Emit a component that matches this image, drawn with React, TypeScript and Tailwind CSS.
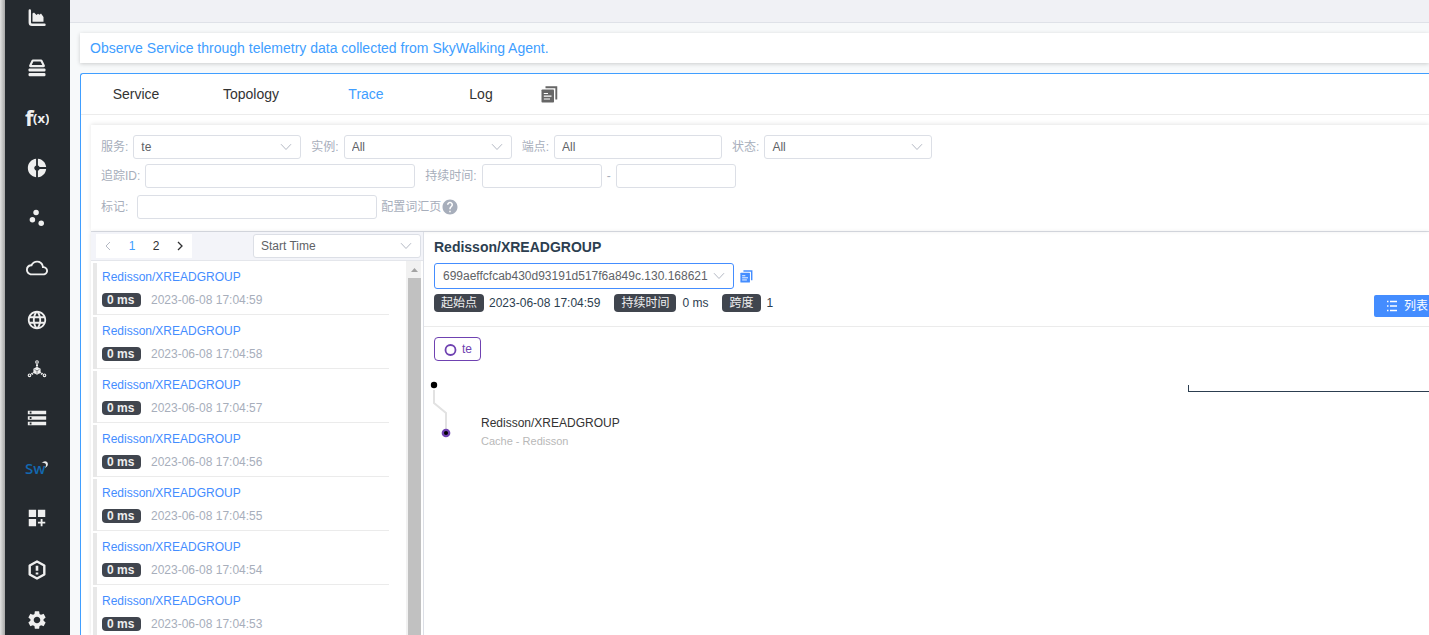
import type { ReactNode } from "react";
import clsx from "clsx";
import {
  MdCloudQueue,
  MdDashboardCustomize,
  MdDonutSmall,
  MdHelp,
  MdLanguage,
  MdScatterPlot,
  MdSettings,
  MdStorage,
} from "react-icons/md";

const AreaChartIcon = () => (
  <svg width="18" height="18" viewBox="0 0 18 18">
    <path d="M1.800 1.500V13.500Q1.800 15.800 4 15.800H16.500" fill="none" stroke="currentColor" strokeWidth="2.400" strokeLinecap="round" />
    <path d="M4.500 12.800V4.500L6 3.600L8.500 6L10 4.800L11.500 5.800L13 4.500L15.500 8V12.800Z" fill="currentColor" />
  </svg>
);

const StackIcon = () => (
  <svg width="18" height="18" viewBox="0 0 18 18" fill="currentColor">
    <path fillRule="evenodd" d="M3.600 1.200Q4 .400 4.900 .400H13.100Q14 .400 14.400 1.200L16.900 6.400Q17.200 8.200 15.500 8.200H2.500Q.800 8.200 1.100 6.400ZM5.400 2.500L3.700 6H14.300L12.600 2.500Z" />
    <rect x=".5" y="9.400" width="17" height="3.200" rx="1" />
    <rect x=".5" y="14" width="17" height="3.200" rx="1.200" />
  </svg>
);

const FunctionIcon = () => (
  <svg width="24" height="24" viewBox="0 0 24 24" fill="currentColor" fontFamily="Open Sans, sans-serif" fontWeight="700">
    <text x="0" y="20" fontSize="22">f</text>
    <text x="8" y="17" fontSize="13">(x)</text>
  </svg>
);

const ClusterIcon = () => (
  <svg width="20" height="18" viewBox="0 0 20 18" fill="none" stroke="currentColor">
    <circle cx="10" cy="2" r="1.300" strokeWidth="1.100" />
    <circle cx="2.500" cy="15.300" r="1.300" strokeWidth="1.100" />
    <circle cx="17.500" cy="15.300" r="1.300" strokeWidth="1.100" />
    <path d="M10 4.300V7M4.500 14.200L7 12.500M15.500 14.200L13 12.500" strokeWidth="2" strokeDasharray="1.600 .7" />
    <path d="M10 6.800L13.600 8.800V12.800L10 14.800L6.400 12.800V8.800Z" fill="currentColor" stroke="none" />
    <path d="M7.500 9.400L10 10.800L12.500 9.400M10 10.800V13.700" stroke="#252a2f" strokeWidth=".5" />
  </svg>
);

const SkyWalkingIcon = () => (
  <svg width="24" height="18" viewBox="0 0 24 18">
    <text x="0" y="14.500" fontSize="15" fontFamily="Open Sans, sans-serif" fontWeight="600" fill="#1368b0">Sw</text>
    <path d="M16.500 4Q20 1 22.500 3.500Q24 6.500 20 9Q22 5.500 20 4.300Q18.500 3.500 16.500 4Z" fill="#e8e8e8" />
  </svg>
);

const AlarmIcon = () => (
  <svg width="20" height="20" viewBox="0 0 20 20" fill="none" stroke="currentColor">
    <path d="M10 1.500L17.300 5.500V14.500L10 18.500L2.700 14.500V5.500Z" strokeWidth="2.400" strokeLinejoin="round" />
    <path d="M10 5.800V10.800M10 12.500V14.600" strokeWidth="2.600" />
  </svg>
);

const CopyIcon = ({ size }: { size: number }) => (
  <svg width={size} height={size} viewBox="0 0 17 17">
    <path d="M4.500 1.200H15.300V13.500" fill="none" stroke="currentColor" strokeWidth="1.900" />
    <rect x=".5" y="3.500" width="12.500" height="13" rx=".8" fill="currentColor" />
    <path d="M2.800 7.500H7M2.800 10.200H10.500M2.800 13H9" stroke="#fff" strokeWidth="1.200" />
  </svg>
);

const Chevron = () => (
  <svg className="pointer-events-none absolute right-[9px] top-1/2 -translate-y-1/2 text-[#b4b9c4]" width="12" height="8" viewBox="0 0 12 8">
    <path d="M1 1.200L6 6.500L11 1.200" fill="none" stroke="currentColor" />
  </svg>
);

const menu: { name: string; icon: ReactNode }[] = [
  { name: "General Service", icon: <AreaChartIcon /> },
  { name: "Service Mesh", icon: <StackIcon /> },
  { name: "Functions", icon: <FunctionIcon /> },
  { name: "Browser", icon: <MdDonutSmall size={22} /> },
  { name: "Kubernetes", icon: <MdScatterPlot size={22} /> },
  { name: "Infrastructure", icon: <MdCloudQueue size={22} /> },
  { name: "Web", icon: <MdLanguage size={22} /> },
  { name: "Cluster", icon: <ClusterIcon /> },
  { name: "Database", icon: <MdStorage size={22} /> },
  { name: "Self Observability", icon: <SkyWalkingIcon /> },
  { name: "Dashboards", icon: <MdDashboardCustomize size={22} /> },
  { name: "Alarms", icon: <AlarmIcon /> },
  { name: "Settings", icon: <MdSettings size={22} /> },
];

const tabs = ["Service", "Topology", "Trace", "Log"];
const seconds = [59, 58, 57, 56, 55, 54, 53];

const controlBase = "rounded-[3px] border bg-white text-xs text-[#606266] outline-none";
const control = clsx(controlBase, "h-6 border-[#dcdfe6] px-[7px]");

function Select({ id, value, label, active }: { id: string; value: string; label?: string; active?: boolean }) {
  return (
    <span className="relative block">
      <select
        id={id}
        aria-label={label}
        className={clsx("block appearance-none", active ? [controlBase, "h-[26px] w-[300px] border-[#448dff] px-2"] : [control, "w-[168px]"])}
      >
        <option>{value}</option>
      </select>
      <Chevron />
    </span>
  );
}

function Field({ id, label, children }: { id: string; label: string; children: ReactNode }) {
  return (
    <div className="flex items-center gap-[5px]">
      <label htmlFor={id}>{label}</label>
      {children}
    </div>
  );
}

function Filters() {
  return (
    <form className="flex h-[107px] shrink-0 flex-col gap-[5px] border-b border-[#dcdfe6] pl-[10px] pt-[10px] text-xs text-[#a7aebb] shadow-[0_-1px_4px_rgba(0,0,0,0.1)]">
      <div className="flex gap-[10px]">
        <Field id="service" label="服务:"><Select id="service" value="te" /></Field>
        <Field id="instance" label="实例:"><Select id="instance" value="All" /></Field>
        <Field id="endpoint" label="端点:"><input id="endpoint" defaultValue="All" className={clsx(control, "w-[168px]")} /></Field>
        <Field id="status" label="状态:"><Select id="status" value="All" /></Field>
      </div>
      <div className="flex gap-[10px]">
        <Field id="trace" label="追踪ID:"><input id="trace" className={clsx(control, "w-[270px]")} /></Field>
        <Field id="duration" label="持续时间:">
          <input id="duration" className={clsx(control, "w-[120px]")} />
          <span>-</span>
          <input aria-label="持续时间" className={clsx(control, "w-[120px]")} />
        </Field>
      </div>
      <div className="flex items-center pt-[2px]">
        <label htmlFor="tags" className="mr-[9px]">标记:</label>
        <input id="tags" className={clsx(control, "mr-1 w-[240px]")} />
        <a href="#tags" className="flex items-center">配置词汇页<MdHelp size={18} /></a>
      </div>
    </form>
  );
}

function TraceList() {
  return (
    <section className="flex w-[333px] shrink-0 flex-col border-r border-[#dcdfe6]">
      <div className="flex h-[29px] shrink-0 items-center justify-between border-b border-[#e4e6eb] bg-[#f3f4f9] pl-[5px] pr-[2px]">
        <div className="flex h-6 bg-white text-xs">
          <button aria-label="Previous page" className="flex w-6 items-center justify-center text-[#b4b9c4]">
            <svg width="8" height="10" viewBox="0 0 8 10"><path d="M6 1L2 5L6 9" fill="none" stroke="currentColor" /></svg>
          </button>
          <button className="w-6 text-[#409eff]">1</button>
          <button className="w-6 text-[#303133]">2</button>
          <button aria-label="Next page" className="flex w-6 items-center justify-center text-[#303133]">
            <svg width="8" height="10" viewBox="0 0 8 10"><path d="M2 1L6 5L2 9" fill="none" stroke="currentColor" strokeWidth="1.300" /></svg>
          </button>
        </div>
        <Select id="order" label="Order" value="Start Time" />
      </div>
      <div className="flex min-h-0 flex-1 pr-[2px]">
        <ul className="flex min-w-0 flex-1 flex-col gap-[2px] overflow-hidden pl-[2px] pr-[17px] pt-[2px]">
          {seconds.map((s) => (
            <li key={s} className="flex h-[52px] shrink-0">
              <span className="w-1 bg-[#e8e8e8]" />
              <div className="flex-1 border-b border-[#ebebeb] pl-[5px] pt-[6px] text-xs">
                <a href="#trace" className="block text-[#448dff]">Redisson/XREADGROUP</a>
                <div className="mt-[7px] flex items-center gap-[10px]">
                  <span className="h-[14px] w-[39px] rounded-[4px] bg-[#40454e] pl-[5px] font-bold leading-[14px] text-[#eeeeee]">0 ms</span>
                  <time className="text-[#a7aebb]">2023-06-08 17:04:{s}</time>
                </div>
              </div>
            </li>
          ))}
        </ul>
        <div className="flex w-[15px] flex-col bg-[#f1f1f1] pl-[2px]">
          <svg className="h-[17px] w-[13px] shrink-0" viewBox="0 0 13 17"><path d="M3 11L6.500 7L10 11Z" fill="#a3a3a3" /></svg>
          <div className="flex-1 bg-[#c1c1c1]" />
        </div>
      </div>
    </section>
  );
}

function Badge({ children }: { children: string }) {
  return <span className="h-[18px] rounded-[4px] bg-[#40454e] px-[7px] leading-[18px] text-[#eeeeee]">{children}</span>;
}

function TraceDetail() {
  return (
    <section className="flex min-w-0 flex-1 flex-col text-xs">
      <div className="h-[95px] shrink-0 border-b border-[#ebebeb] pl-[10px] pt-[5px] text-[#2c3e50]">
        <h2 className="text-sm font-bold">Redisson/XREADGROUP</h2>
        <div className="mt-[6px] flex items-center gap-[6px]">
          <Select id="segment" label="Trace ID" value="699aeffcfcab430d93191d517f6a849c.130.168621" active />
          <button aria-label="Copy" className="text-[#448dff]"><CopyIcon size={13} /></button>
        </div>
        <div className="mt-[5px] flex items-start">
          <div className="flex items-center leading-[18px]">
            <Badge>起始点</Badge>
            <span className="ml-[5px] mr-[14px]">2023-06-08 17:04:59</span>
            <Badge>持续时间</Badge>
            <span className="ml-[6px] mr-[14px]">0 ms</span>
            <Badge>跨度</Badge>
            <span className="ml-[6px]">1</span>
          </div>
          <button className="ml-auto mt-px flex h-[22px] items-center gap-[7px] rounded-l-[2px] bg-[#448dff] pl-[13px] pr-px text-white">
            <svg width="10" height="12" viewBox="0 0 10 12" stroke="currentColor" strokeWidth="1.400">
              <path d="M0 1.500H1.500M3 1.500H10M0 6H1.500M3 6H10M0 10.500H1.500M3 10.500H10" />
            </svg>
            <span>列表</span>
          </button>
        </div>
      </div>
      <div className="px-[10px] pt-[10px]">
        <span className="inline-flex h-6 w-[47px] items-center gap-[5px] rounded-[4px] border border-[#6f42b1] pl-[9px] text-[#6f42b1]">
          <svg width="13" height="13" viewBox="0 0 13 13"><circle cx="6.500" cy="7" r="5" fill="none" stroke="currentColor" strokeWidth="1.800" /></svg>
          te
        </span>
      </div>
      <div className="flex pl-[6px] pt-[18px]">
        <svg width="26" height="62" viewBox="0 0 26 62">
          <path d="M4 11V24L16 34V52" fill="none" stroke="#e2e2e2" strokeWidth="2" />
          <circle cx="4" cy="6" r="3.200" />
          <circle cx="16" cy="54" r="3.200" stroke="#6f42b1" strokeWidth="2.300" />
        </svg>
        <div className="ml-[25px] pt-9">
          <p className="text-[#333333]">Redisson/XREADGROUP</p>
          <p className="mt-[2px] text-[11px] leading-4 text-[#b8b8b8]">Cache - Redisson</p>
        </div>
        <div className="ml-auto mt-[6px] h-[7px] w-[241px] border-b border-l border-[#2c3e50]" />
      </div>
    </section>
  );
}

export default function App() {
  return (
    <div className="flex h-screen overflow-hidden bg-[#f7f9fa] font-['Liberation_Sans','Noto_Sans_CJK_SC',sans-serif]">
      <div className="w-[5px] shrink-0 bg-gradient-to-r from-[#e2e2e2] to-[#a8a8a8]" />
      <nav className="w-[65px] shrink-0 overflow-hidden bg-[#252a2f] pr-px text-[#efefef]">
        {menu.map((item, i) => (
          <a
            key={item.name}
            href="#menu"
            aria-label={item.name}
            className={clsx(
              "flex items-center justify-center",
              i === 0 ? "h-[43px] pb-[7px]" : item.name === "Web" || item.name === "Alarms" ? "h-[52px] pt-[2px]" : item.name === "Cluster" ? "h-12" : "h-[50px]",
            )}
          >
            {item.icon}
          </a>
        ))}
      </nav>
      <div className="flex min-w-0 flex-1 flex-col">
        <header className="h-[23px] shrink-0 border-b border-[#dfe2e8] bg-[#f0f1f5]" />
        <main className="flex min-h-0 flex-1 flex-col gap-[10px] pl-[10px] pt-[10px]">
          <p className="h-[30px] shrink-0 bg-white pl-[10px] text-sm leading-[30px] text-[#409eff] shadow-[0_1px_4px_rgba(0,0,0,0.18)]">
            Observe Service through telemetry data collected from SkyWalking Agent.
          </p>
          <div className="flex min-h-0 flex-1 flex-col rounded-tl-[3px] border-l border-t border-[#409eff] bg-white">
            <div className="flex h-[41px] shrink-0 items-center gap-[5px] border-b border-[#ececec] text-sm">
              {tabs.map((tab) => (
                <a key={tab} href="#tab" className={clsx("w-[110px] text-center", tab === "Trace" ? "text-[#409eff]" : "text-[#333333]")}>
                  {tab}
                </a>
              ))}
              <button aria-label="Copy tab link" className="text-[#666666]"><CopyIcon size={17} /></button>
            </div>
            <div className="flex min-h-0 flex-1 flex-col pl-[10px] pt-[10px]">
              <Filters />
              <div className="flex min-h-0 flex-1 shadow-[0_0_4px_rgba(0,0,0,0.12)]">
                <TraceList />
                <TraceDetail />
              </div>
            </div>
          </div>
        </main>
      </div>
    </div>
  );
}
